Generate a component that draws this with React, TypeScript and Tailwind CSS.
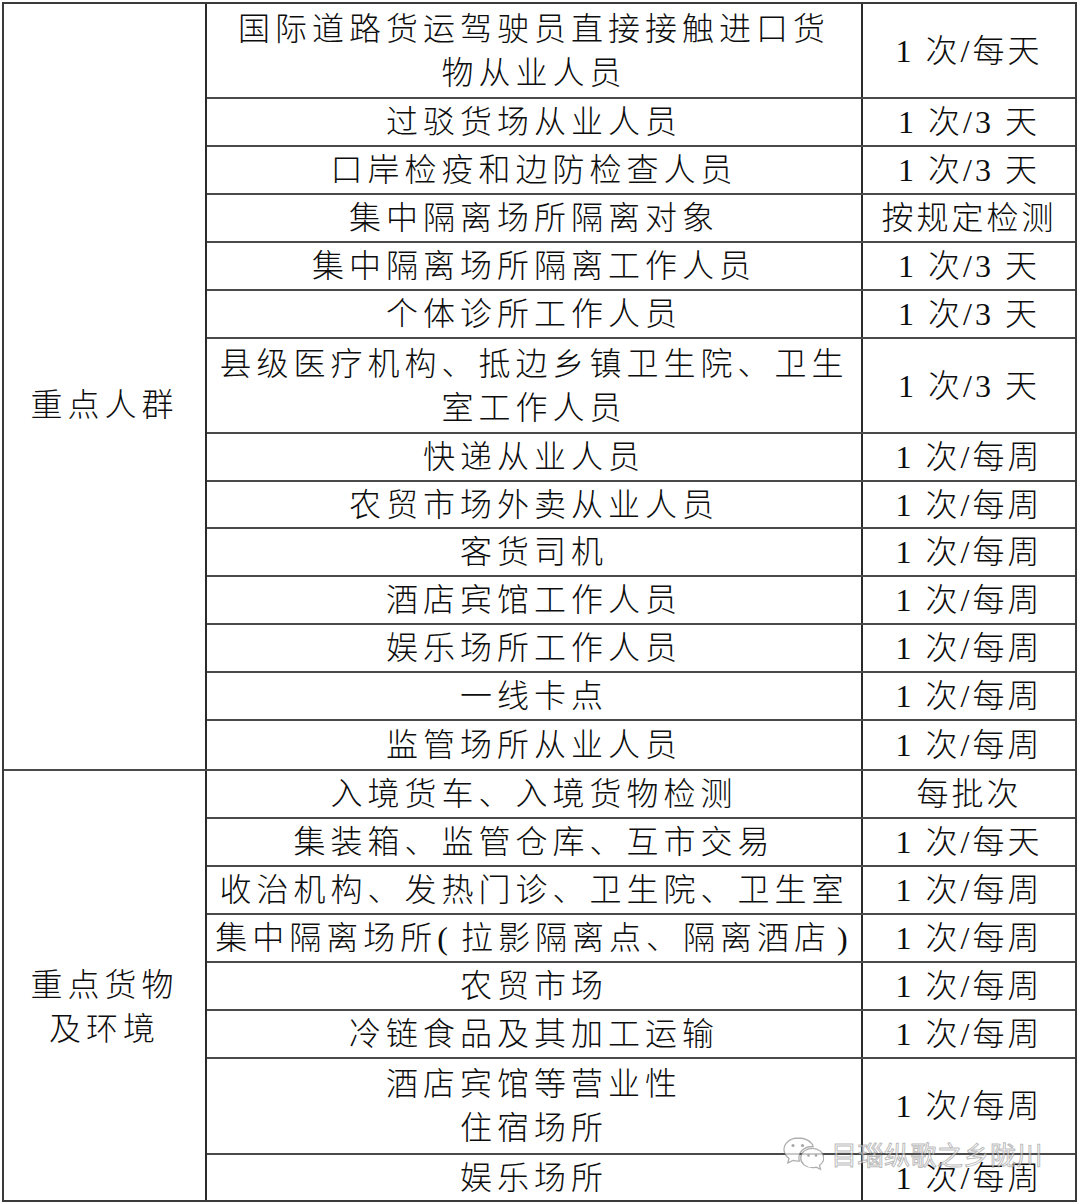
import React from "react";

type Row = { mid: React.ReactNode[]; right: string; h: string; last?: boolean };

const groupA: Row[] = [
  { mid: ["国际道路货运驾驶员直接接触进口货", "物从业人员"], right: "1 次/每天", h: "h-[95px]" },
  { mid: ["过驳货场从业人员"], right: "1 次/3 天", h: "h-[48px]" },
  { mid: ["口岸检疫和边防检查人员"], right: "1 次/3 天", h: "h-[48px]" },
  { mid: ["集中隔离场所隔离对象"], right: "按规定检测", h: "h-[48px]" },
  { mid: ["集中隔离场所隔离工作人员"], right: "1 次/3 天", h: "h-[48px]" },
  { mid: ["个体诊所工作人员"], right: "1 次/3 天", h: "h-[48px]" },
  { mid: ["县级医疗机构、抵边乡镇卫生院、卫生", "室工作人员"], right: "1 次/3 天", h: "h-[95px]" },
  { mid: ["快递从业人员"], right: "1 次/每周", h: "h-[48px]" },
  { mid: ["农贸市场外卖从业人员"], right: "1 次/每周", h: "h-[47px]" },
  { mid: ["客货司机"], right: "1 次/每周", h: "h-[48px]" },
  { mid: ["酒店宾馆工作人员"], right: "1 次/每周", h: "h-[48px]" },
  { mid: ["娱乐场所工作人员"], right: "1 次/每周", h: "h-[48px]" },
  { mid: ["一线卡点"], right: "1 次/每周", h: "h-[48px]" },
  { mid: ["监管场所从业人员"], right: "1 次/每周", h: "h-[48px]", last: true },
];

const groupB: Row[] = [
  { mid: ["入境货车、入境货物检测"], right: "每批次", h: "h-[48px]" },
  { mid: ["集装箱、监管仓库、互市交易"], right: "1 次/每天", h: "h-[48px]" },
  { mid: ["收治机构、发热门诊、卫生院、卫生室"], right: "1 次/每周", h: "h-[48px]" },
  {
    mid: [
      <>
        集中隔离场所<span className="mr-[8px]">(</span>拉影隔离点、隔离酒店<span className="ml-[6px]">)</span>
      </>,
    ],
    right: "1 次/每周",
    h: "h-[48px]",
  },
  { mid: ["农贸市场"], right: "1 次/每周", h: "h-[48px]" },
  { mid: ["冷链食品及其加工运输"], right: "1 次/每周", h: "h-[48px]" },
  { mid: ["酒店宾馆等营业性", "住宿场所"], right: "1 次/每周", h: "h-[96px]" },
  { mid: ["娱乐场所"], right: "1 次/每周", h: "h-[45px]", last: true },
];

const font =
  "font-['Liberation_Serif','Noto_Sans_CJK_SC',serif] font-light text-[#0d0d0d] text-[32px] tracking-[5px] leading-[44px] whitespace-nowrap";

function TableRow({ row }: { row: Row }) {
  return (
    <div className={`flex ${row.h} ${row.last ? "" : "border-b-2 border-[#4a4a4a]"}`}>
      <div className="w-[656px] shrink-0 border-r-2 border-[#2a2a2a] flex flex-col items-center justify-center">
        {row.mid.map((l, i) => (
          <div key={i}>{l}</div>
        ))}
      </div>
      <div className="flex-1 flex items-center justify-center tracking-[3px]">{row.right}</div>
    </div>
  );
}

function Group({ label, rows, pt, bottom }: { label: string[]; rows: Row[]; pt: string; bottom?: boolean }) {
  return (
    <div className={`flex ${bottom ? "border-b-2 border-[#4a4a4a]" : ""}`}>
      <div className={`w-[203px] shrink-0 border-r-2 border-[#2a2a2a] flex flex-col items-center justify-center ${pt}`}>
        {label.map((l, i) => (
          <div key={i}>{l}</div>
        ))}
      </div>
      <div className="flex-1 flex flex-col">
        {rows.map((r, i) => (
          <TableRow key={i} row={r} />
        ))}
      </div>
    </div>
  );
}

function WeChatIcon() {
  return (
    <svg width="42" height="36" viewBox="0 0 42 36" fill="none">
      <path
        d="M16 2C8 2 2 7.2 2 13.6c0 3.6 2 6.8 5 8.9L5.8 27l5-2.6c1.6.5 3.4.8 5.2.8.5 0 1 0 1.5-.1-.4-1-.6-2.1-.6-3.2 0-6.3 6-11.4 13.4-11.4h.8C29.8 5.6 23.6 2 16 2Z"
        fill="rgba(255,255,255,0.7)"
        stroke="rgba(110,110,110,0.55)"
        strokeWidth="1.3"
      />
      <path
        d="M30.3 12.3c-6.4 0-11.6 4.3-11.6 9.7s5.2 9.7 11.6 9.7c1.4 0 2.8-.2 4-.6l4.2 2.2-1-3.9c2.6-1.8 4.3-4.5 4.3-7.4 0-5.4-5.2-9.7-11.5-9.7Z"
        fill="rgba(255,255,255,0.7)"
        stroke="rgba(110,110,110,0.55)"
        strokeWidth="1.3"
      />
      <circle cx="11" cy="9.5" r="1.6" fill="rgba(110,110,110,0.6)" />
      <circle cx="20.5" cy="9.5" r="1.6" fill="rgba(110,110,110,0.6)" />
      <circle cx="26.5" cy="19.5" r="1.3" fill="rgba(110,110,110,0.6)" />
      <circle cx="34" cy="19.5" r="1.3" fill="rgba(110,110,110,0.6)" />
    </svg>
  );
}

export default function App() {
  return (
    <div className="w-[1080px] h-[1204px] bg-white relative overflow-hidden pt-[2px] pl-[2px]">
      <div className={`w-[1075px] border-2 border-[#3a3a3a] flex flex-col ${font}`}>
        <Group label={["重点人群"]} rows={groupA} pt="pt-[36px]" bottom />
        <Group label={["重点货物", "及环境"]} rows={groupB} pt="pt-[43px]" />
      </div>
      <div className="absolute left-[782px] top-[1136px] flex items-center gap-[7px]">
        <WeChatIcon />
        <span className="font-['Noto_Sans_CJK_SC',sans-serif] text-[26px] tracking-[0.5px] leading-none text-[rgba(255,255,255,0.55)] [-webkit-text-stroke:1px_rgba(100,100,100,0.45)]">
          目瑙纵歌之乡陇川
        </span>
      </div>
    </div>
  );
}
